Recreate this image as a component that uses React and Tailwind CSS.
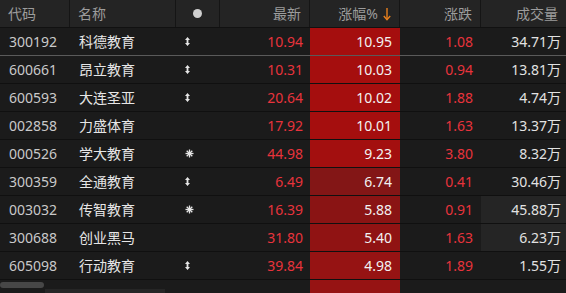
import React from 'react';

const ROWS = [
  { code: '300192', name: '科德教育', icon: 'ud', last: '10.94', pct: '10.95', chg: '1.08', vol: '34.71万', bg: 'bg-[#a50e0e]' },
  { code: '600661', name: '昂立教育', icon: 'ud', last: '10.31', pct: '10.03', chg: '0.94', vol: '13.81万', bg: 'bg-[#a50e0e]' },
  { code: '600593', name: '大连圣亚', icon: 'ud', last: '20.64', pct: '10.02', chg: '1.88', vol: '4.74万', bg: 'bg-[#a50e0e]' },
  { code: '002858', name: '力盛体育', icon: null, last: '17.92', pct: '10.01', chg: '1.63', vol: '13.37万', bg: 'bg-[#a50e0e]' },
  { code: '000526', name: '学大教育', icon: 'star', last: '44.98', pct: '9.23', chg: '3.80', vol: '8.32万', bg: 'bg-[#a30f0f]' },
  { code: '300359', name: '全通教育', icon: 'ud', last: '6.49', pct: '6.74', chg: '0.41', vol: '30.46万', bg: 'bg-[#831616]' },
  { code: '003032', name: '传智教育', icon: 'star', last: '16.39', pct: '5.88', chg: '0.91', vol: '45.88万', bg: 'bg-[#8a1414]', hover: true },
  { code: '300688', name: '创业黑马', icon: null, last: '31.80', pct: '5.40', chg: '1.63', vol: '6.23万', bg: 'bg-[#901313]', hover: true },
  { code: '605098', name: '行动教育', icon: 'ud', last: '39.84', pct: '4.98', chg: '1.89', vol: '1.55万', bg: 'bg-[#961313]' },
];

const GRID = 'grid grid-cols-[70px_106px_44px_90px_90px_81px_85px]';

const UpDown = () => (
  <svg width="5" height="9" viewBox="0 0 5 9">
    <path d="M2.5 0 L5 3 L0 3 Z M2.5 9 L5 6 L0 6 Z" fill="#e6e6e6" />
    <rect x="1.6" y="2.5" width="1.8" height="4" fill="#e6e6e6" />
  </svg>
);

const Star = () => (
  <svg width="9" height="9" viewBox="0 0 9 9" stroke="#e6e6e6" strokeWidth="1.3">
    <line x1="4.5" y1="0.5" x2="4.5" y2="8.5" />
    <line x1="0.5" y1="4.5" x2="8.5" y2="4.5" />
    <line x1="1.7" y1="1.7" x2="7.3" y2="7.3" />
    <line x1="7.3" y1="1.7" x2="1.7" y2="7.3" />
  </svg>
);

const SortDown = () => (
  <svg width="8" height="14" viewBox="0 0 8 14" className="ml-[5px]" fill="none" stroke="#e8801e" strokeWidth="1.4">
    <line x1="4" y1="1" x2="4" y2="12.5" />
    <path d="M0.8 9 L4 12.6 L7.2 9" />
  </svg>
);

const Th = ({ children, right, last }) => (
  <div className={`h-full flex items-center px-2 ${right ? 'justify-end' : ''} ${last ? '' : 'border-r border-[#151515]'}`}>
    {children}
  </div>
);

export default function App() {
  return (
    <div className="w-[566px] h-[293px] overflow-hidden bg-[#1b1b1b] text-[14px] leading-none" style={{ fontFamily: '"Noto Sans", "Noto Sans CJK SC", sans-serif' }}>
      <div className={`${GRID} h-[28px] bg-[#242424] text-[#9c9c9c] border-b border-[#111]`}>
        <Th>代码</Th>
        <Th>名称</Th>
        <Th><span className="mx-auto w-[9px] h-[9px] rounded-full bg-[#cfcfcf]" /></Th>
        <Th right>最新</Th>
        <Th right>
          涨幅%<SortDown />
        </Th>
        <Th right>涨跌</Th>
        <Th right last>成交量</Th>
      </div>
      {ROWS.map((r, i) => (
        <div key={r.code} className={`${GRID} h-[28px] border-b ${i === 0 ? 'border-[#5a5a5a]' : 'border-[#101010]'}`}>
          <div className="flex items-center pl-[9px] text-[#c9c9c9]">{r.code}</div>
          <div className="flex items-center pl-[9px] text-[#e6e6e6]">{r.name}</div>
          <div className="flex items-center pl-[9px]">
            {r.icon === 'ud' && <UpDown />}
            {r.icon === 'star' && <Star />}
          </div>
          <div className="flex items-center justify-end pr-[7px] text-[#e8333c]">{r.last}</div>
          <div className={`flex items-center justify-end pr-[8px] text-[#f2f2f2] ${r.bg}`}>{r.pct}</div>
          <div className="flex items-center justify-end pr-[8px] text-[#e8333c]">{r.chg}</div>
          <div className={`flex items-center justify-end pr-[5px] text-[#e2e2e2] ${r.hover ? 'bg-[#252525]' : ''}`}>{r.vol}</div>
        </div>
      ))}
      <div className={`${GRID} h-[13px] relative`}>
        <div />
        <div />
        <div />
        <div />
        <div className="bg-[#961313]" />
        <div />
        <div />
        <div className="absolute left-0 top-[2px] w-[44px] h-[6px] rounded-full bg-[#474747]" />
        <div className="absolute left-[45px] top-[9px] w-[120px] h-[4px] bg-[#262626]" />
      </div>
    </div>
  );
}
